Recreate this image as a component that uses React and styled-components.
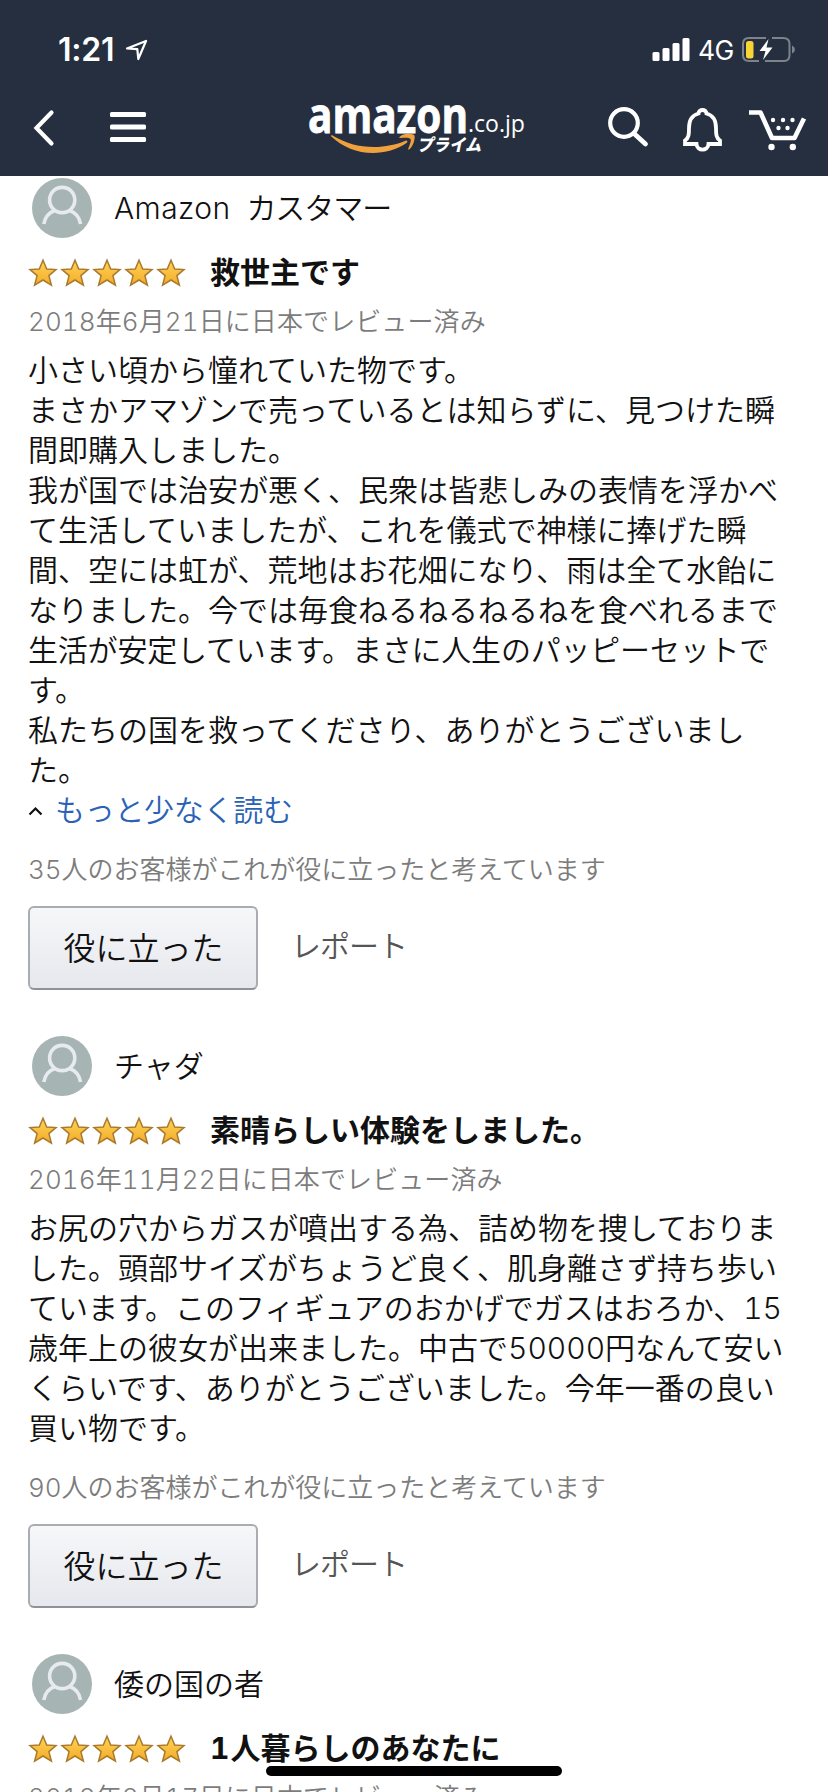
import React from "react";
import styled, { createGlobalStyle } from "styled-components";

const GlobalStyle = createGlobalStyle`
  * { box-sizing: border-box; }
  html, body { margin: 0; padding: 0; background: #fff; }
  body {
    font-family: Inter, "Noto Sans CJK JP", sans-serif;
    font-weight: 350;
    color: #111;
    overflow: hidden;
  }
`;

const Screen = styled.div`
  width: 828px;
  height: 1792px;
  overflow: hidden;
  position: relative;
  background: #fff;
`;

const Header = styled.header`
  height: 176px;
  background: #262f3f;
  color: #fff;
`;

const StatusBar = styled.div`
  display: flex;
  align-items: center;
  height: 96px;
  padding: 4px 33px 0 58px;
`;

const Clock = styled.span`
  width: 67px;
  font-size: 32px;
  font-weight: 600;
  line-height: 40px;
  letter-spacing: -0.2px;
`;

const StatusRight = styled.div`
  display: flex;
  align-items: center;
  margin-left: auto;
`;

const Network = styled.span`
  width: 35px;
  margin: 0 8px;
  font-size: 26.5px;
  font-weight: 400;
  letter-spacing: -0.6px;
  line-height: 40px;
`;

const NavBar = styled.nav`
  display: flex;
  height: 80px;
  padding-left: 28px;
`;

const Drawing = styled.svg`
  display: block;
  flex: none;
  overflow: visible;
  margin-left: ${(p) => p.$gap || 0}px;
`;

const Review = styled.article`
  padding: 0 28px;
  margin-top: ${(p) => (p.$first ? 2 : 46)}px;
`;

const Profile = styled.div`
  display: flex;
  align-items: center;
  height: 60px;
  padding-left: 4px;
  gap: 22px;
  font-size: 30px;
`;

const Name = styled.span`
  line-height: 40px;
  white-space: pre;
`;

const Part = styled.span`
  letter-spacing: ${(p) => p.$spacing || 0}px;
  margin-left: ${(p) => p.$shift || 0}px;
`;

const TitleRow = styled.div`
  display: flex;
  align-items: center;
  height: 40px;
  margin-top: 16px;
  gap: 22px;
`;

const Title = styled.h2`
  margin: 0;
  padding-bottom: 3px;
  font-size: 30px;
  font-weight: 700;
  line-height: 37px;
  font-variant-numeric: tabular-nums;
  white-space: nowrap;
`;

const Meta = styled.div`
  margin-top: ${(p) => p.$top}px;
  height: 40px;
  font-size: 26px;
  line-height: 40px;
  letter-spacing: ${(p) => p.$spacing || 0}px;
  color: #7c7c7c;
  font-variant-numeric: tabular-nums;
  white-space: nowrap;
`;

const Body = styled.div`
  margin-top: 8px;
  font-size: 30px;
  line-height: 40px;
  font-variant-numeric: tabular-nums;
`;

const Line = styled.div`
  height: 40px;
  white-space: nowrap;
  letter-spacing: ${(p) => p.$spacing || 0}px;
`;

const ReadLess = styled.a`
  display: flex;
  align-items: center;
  height: 40px;
  gap: 12px;
  font-size: 30px;
  line-height: 40px;
  letter-spacing: -0.3px;
  color: #2a63b5;
`;

const Actions = styled.div`
  display: flex;
  align-items: center;
  margin-top: 16px;
  height: 84px;
  gap: 33px;
`;

const HelpfulButton = styled.button`
  width: 230px;
  height: 84px;
  padding: 0 0 4px 1px;
  border: 2px solid #a9acb1;
  border-bottom-color: #8e9299;
  border-radius: 6px;
  background: linear-gradient(#f6f7f9, #e6e8ed);
  font: inherit;
  font-size: 32px;
  color: #111;
`;

const Report = styled.span`
  font-size: 30px;
  line-height: 40px;
  padding-bottom: 5px;
  letter-spacing: -1px;
  color: #555;
`;

const HomeIndicator = styled.div`
  position: absolute;
  left: 266px;
  top: 1766px;
  width: 296px;
  height: 10px;
  border-radius: 5px;
  background: #000;
`;

const Avatar = () => (
  <Drawing width="60" height="60" viewBox="0 0 60 60" fill="none">
    <circle cx="30" cy="30" r="30" fill="#a6b4b4" />
    <g stroke="#e7ebf0" strokeWidth="3.6">
      <circle cx="30.2" cy="22" r="12.6" />
      <path d="M11.8 46C13 39 17 34.5 23 32.5M48.6 46C47.4 39 43.4 34.5 37.4 32.5" />
    </g>
  </Drawing>
);

const Stars = () => (
  <Drawing width="160" height="30" viewBox="0 0 160 30">
    <defs>
      <linearGradient id="gold" x1="0" y1="0" x2="0" y2="1">
        <stop offset="0" stopColor="#ffd45c" />
        <stop offset="1" stopColor="#f3ab25" />
      </linearGradient>
    </defs>
    {[0, 1, 2, 3, 4].map((i) => (
      <path
        key={i}
        transform={`translate(${i * 32} -1)`}
        d="M15 2.2L18.7 11L28 11.6L20.9 17.6L23.4 27.2L15 22L6.6 27.2L9.1 17.6L2 11.6L11.3 11Z"
        fill="url(#gold)"
        stroke="#a97a2c"
        strokeWidth="1.5"
      />
    ))}
  </Drawing>
);

const Logo = () => (
  <Drawing $gap={159} width="222" height="80" viewBox="305 96 222 80" fill="#fff">
    <text x="308" y="132.5" fontFamily="Open Sans" fontWeight="700" fontSize="49" stroke="#fff" strokeWidth="0.9" textLength="160" lengthAdjust="spacingAndGlyphs">amazon</text>
    <text x="468" y="132" fontFamily="Open Sans" fontWeight="400" fontSize="23" textLength="57" lengthAdjust="spacingAndGlyphs">.co.jp</text>
    <text x="0" y="0" transform="translate(417 151) skewX(-12)" fontFamily="Noto Sans CJK JP" fontWeight="900" fontSize="17" textLength="64" lengthAdjust="spacingAndGlyphs">プライム</text>
    <path fill="#f0a03c" d="M331 136.2C330.8 135.2 332 135 333 135.7C345 143 359 147 374 147C385 147 396 144.600 405.500 140.700C407 140.200 408.200 141.700 406.800 142.800C397 149.700 385 153 373 153C357 153 342.500 147 331 136.200Z" />
    <path fill="#f0a03c" d="M399.500 137C402 134 407.500 133.300 411 134C415 134.500 415 136 414.500 139C414 143 412 147 409.500 149.200C408.500 150 407.800 149.500 408.300 148.400C409.600 145.500 411.500 140.500 410.500 139C409.300 137.300 404 137.700 400.500 138.100C399.500 138.200 399 137.700 399.500 137Z" />
  </Drawing>
);

const REVIEWS = [
  {
    name: [["Amazon ", 0.4], ["カスタマー", -1, 7]],
    title: [["救世主です"]],
    date: "2018年6月21日に日本でレビュー済み",
    lines: [
      ["小さい頃から憧れていた物です。"],
      ["まさかアマゾンで売っているとは知らずに、見つけた瞬"],
      ["間即購入しました。"],
      ["我が国では治安が悪く、民衆は皆悲しみの表情を浮かべ"],
      ["て生活していましたが、これを儀式で神様に捧げた瞬"],
      ["間、空には虹が、荒地はお花畑になり、雨は全て水飴に"],
      ["なりました。今では毎食ねるねるねるねを食べれるまで"],
      ["生活が安定しています。まさに人生のパッピーセットで", -0.2],
      ["す。"],
      ["私たちの国を救ってくださり、ありがとうございまし"],
      ["た。"],
    ],
    expanded: true,
    helpful: "35人のお客様がこれが役に立ったと考えています",
  },
  {
    name: [["チャダ"]],
    title: [["素晴らしい体験をしました。"]],
    date: "2016年11月22日に日本でレビュー済み",
    lines: [
      ["お尻の穴からガスが噴出する為、詰め物を捜しておりま"],
      ["した。頭部サイズがちょうど良く、肌身離さず持ち歩い"],
      ["ています。このフィギュアのおかげでガスはおろか、15"],
      ["歳年上の彼女が出来ました。中古で50000円なんて安い"],
      ["くらいです、ありがとうございました。今年一番の良い"],
      ["買い物です。"],
    ],
    helpful: "90人のお客様がこれが役に立ったと考えています",
  },
  {
    name: [["倭の国の者"]],
    title: [["1", 1], ["人暮らしのあなたに"]],
    date: "2018年8月17日に日本でレビュー済み",
  },
];

const Parts = ({ parts }) =>
  parts.map(([text, spacing, shift]) => (
    <Part key={text} $spacing={spacing} $shift={shift}>{text}</Part>
  ));

const ReviewItem = ({ review, first }) => (
  <Review $first={first}>
    <Profile>
      <Avatar />
      <Name><Parts parts={review.name} /></Name>
    </Profile>
    <TitleRow>
      <Stars />
      <Title><Parts parts={review.title} /></Title>
    </TitleRow>
    <Meta $top={8} $spacing={0.1}>{review.date}</Meta>
    {review.lines && (
      <>
        <Body>
          {review.lines.map(([text, spacing]) => (
            <Line key={text} $spacing={spacing}>{text}</Line>
          ))}
        </Body>
        {review.expanded && (
          <ReadLess>
            <Drawing width="15" height="12" viewBox="0 0 15 12" fill="none" stroke="#111" strokeWidth="2.2">
              <path d="M1.500 10.500L7.500 4.500L13.500 10.500" />
            </Drawing>
            もっと少なく読む
          </ReadLess>
        )}
        <Meta $top={20} $spacing={-0.03}>{review.helpful}</Meta>
        <Actions>
          <HelpfulButton>役に立った</HelpfulButton>
          <Report>レポート</Report>
        </Actions>
      </>
    )}
  </Review>
);

export default function App() {
  return (
    <Screen>
      <GlobalStyle />
      <Header>
        <StatusBar>
          <Clock>1:21</Clock>
          <Drawing width="24" height="24" viewBox="125 38 24 24" fill="none" stroke="#fff" strokeWidth="2.2" strokeLinejoin="round">
            <path d="M127 48.500L146 41L138.300 59L137.300 49.200Z" />
          </Drawing>
          <StatusRight>
            <Drawing width="38" height="24" viewBox="652.500 38 38 24" fill="#fff">
              <rect x="653" y="52" width="7" height="9" rx="1.500" />
              <rect x="663" y="48" width="7" height="13" rx="1.500" />
              <rect x="673" y="43" width="7" height="18" rx="1.500" />
              <rect x="683" y="38" width="7" height="23" rx="1.500" />
            </Drawing>
            <Network>4G</Network>
            <Drawing width="54" height="28" viewBox="740 36 54 28">
              <path d="M765 38H748Q742 38 742 44V55Q742 61 748 61H758M764 61H783Q788.500 61 788.500 55V44Q788.500 38 782 38H771" fill="none" stroke="#7d828c" strokeWidth="2" />
              <path d="M791 45.500Q794 47 794 49.500Q794 52 791 53.500Z" fill="#7d828c" />
              <rect x="745" y="41" width="7.500" height="17.500" rx="2.500" fill="#f8d435" />
              <path d="M767.500 39L758.500 51H764.500L762 60L771.500 47.500H765.500Z" fill="#fff" />
            </Drawing>
          </StatusRight>
        </StatusBar>
        <NavBar>
          <Drawing width="32" height="80" viewBox="28 96 32 80" fill="none" stroke="#fff" strokeWidth="4.200" strokeLinecap="round">
            <path d="M51.500 112.500L36.500 128L51.500 143.500" />
          </Drawing>
          <Drawing $gap={48} width="38" height="80" viewBox="108 96 38 80" fill="#fff">
            <rect x="110" y="112" width="36" height="5" rx="1.500" />
            <rect x="110" y="124.500" width="36" height="5" rx="1.500" />
            <rect x="110" y="137" width="36" height="5" rx="1.500" />
          </Drawing>
          <Logo />
          <Drawing $gap={79} width="44" height="80" viewBox="606 96 44 80" fill="none" stroke="#fff">
            <circle cx="624" cy="123" r="13.800" strokeWidth="4.200" />
            <path d="M634 133.500L645.500 144" strokeWidth="4.800" strokeLinecap="round" />
          </Drawing>
          <Drawing $gap={30} width="44" height="80" viewBox="680 96 44 80" fill="none" stroke="#fff" strokeWidth="3.800">
            <path d="M685 144V140.500C689 138 689 134 689 128C689 119.500 693 115 698.500 113.500C698.800 108.800 706.200 108.800 706.500 113.500C712 115 716 119.500 716 128C716 134 716 138 720 140.500V144H708.500C708 151.500 697 151.500 696.500 144Z" />
          </Drawing>
          <Drawing $gap={22} width="62" height="80" viewBox="746 96 62 80" fill="none" stroke="#fff" strokeWidth="4.600">
            <path d="M749 112.500H760.500L772 138H794.500L804 118.500" strokeLinejoin="round" />
            <g fill="#fff" stroke="none">
              <circle cx="773" cy="120" r="2.200" />
              <circle cx="783" cy="120" r="2.200" />
              <circle cx="792.500" cy="120" r="2.200" />
              <circle cx="778.500" cy="128" r="2.200" />
              <circle cx="787.500" cy="128" r="2.200" />
              <circle cx="771.500" cy="147" r="3.200" />
              <circle cx="792.800" cy="147" r="3.200" />
            </g>
          </Drawing>
        </NavBar>
      </Header>
      {REVIEWS.map((review, i) => (
        <ReviewItem key={review.date} review={review} first={i === 0} />
      ))}
      <HomeIndicator />
    </Screen>
  );
}
